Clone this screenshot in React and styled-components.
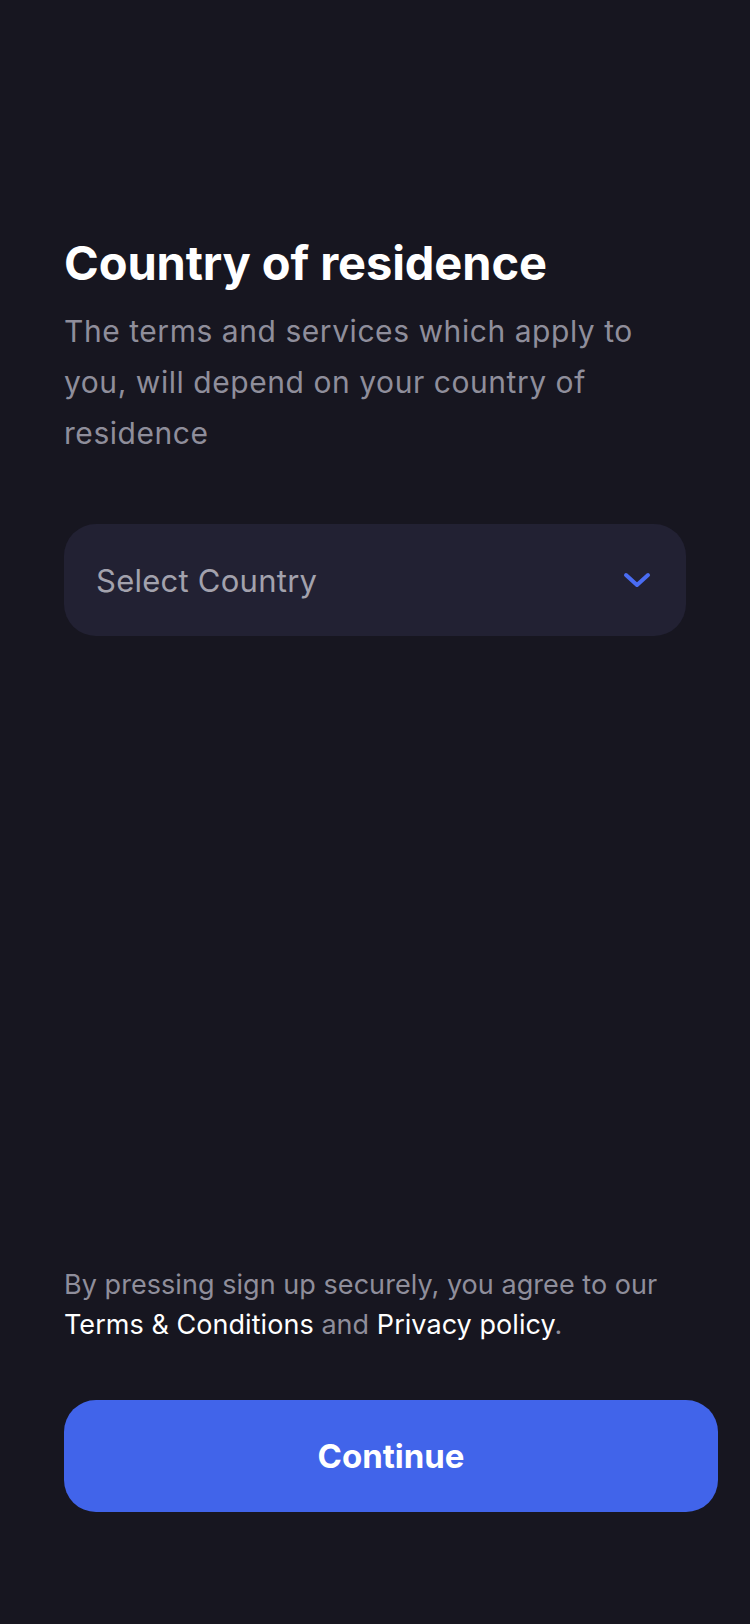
import React from "react";
import styled, { createGlobalStyle } from "styled-components";

const Global = createGlobalStyle`
  html, body { margin: 0; padding: 0; background: #171620; }
  body { font-family: Inter, "Noto Sans", sans-serif; -webkit-font-smoothing: antialiased; }
  * { box-sizing: border-box; }
`;

const Screen = styled.div`
  min-height: 1624px;
  width: 750px;
  background: #171620;
  display: flex;
  flex-direction: column;
  padding: 233px 0 112px 64px;
`;

const Header = styled.div`
  display: flex;
  flex-direction: column;
  padding-right: 64px;
`;

const Title = styled.h1`
  margin: 0;
  font-size: 47px;
  line-height: 60px;
  font-weight: 700;
  color: #ffffff;
  letter-spacing: -0.1px;
`;

const Subtitle = styled.p`
  margin: 13px 0 0;
  max-width: 600px;
  font-size: 30px;
  line-height: 51px;
  font-weight: 400;
  color: #8f8e9b;
  letter-spacing: 0.55px;
`;

const Select = styled.button`
  margin: 65px 64px 0 0;
  height: 112px;
  border: none;
  border-radius: 32px;
  background: #222133;
  display: flex;
  align-items: center;
  justify-content: space-between;
  padding: 0 35px 0 32px;
  font-family: inherit;
  cursor: pointer;
`;

const Placeholder = styled.span`
  font-size: 31px;
  font-weight: 400;
  color: #a3a2ad;
  letter-spacing: 0.25px;
`;

const Spacer = styled.div`
  flex: 1;
`;

const Footer = styled.div`
  display: flex;
  flex-direction: column;
  padding-right: 32px;
`;

const Legal = styled.p`
  margin: 0 32px 0 0;
  font-size: 27px;
  line-height: 40px;
  color: #8f8e9b;
  letter-spacing: 0.05px;
`;

const LinkText = styled.a`
  color: #ffffff;
  text-decoration: none;
`;

const PrimaryButton = styled.button`
  margin-top: 55px;
  height: 112px;
  border: none;
  border-radius: 32px;
  background: #4164ea;
  color: #ffffff;
  font-family: inherit;
  font-size: 33px;
  font-weight: 700;
  cursor: pointer;
`;

const Chevron = () => (
  <svg width="28" height="18" viewBox="0 0 28 18" fill="none">
    <path
      d="M3 4 L14 14 L25 4"
      stroke="#4a6cf2"
      strokeWidth="4"
      strokeLinecap="round"
      strokeLinejoin="round"
    />
  </svg>
);

export default function App() {
  return (
    <>
      <Global />
      <Screen>
        <Header>
          <Title>Country of residence</Title>
          <Subtitle>
            The terms and services which apply to you, will depend on your
            country of residence
          </Subtitle>
        </Header>
        <Select type="button">
          <Placeholder>Select Country</Placeholder>
          <Chevron />
        </Select>
        <Spacer />
        <Footer>
          <Legal>
            By pressing sign up securely, you agree to our{" "}
            <LinkText href="#">Terms &amp; Conditions</LinkText> and{" "}
            <LinkText href="#">Privacy policy</LinkText>.
          </Legal>
          <PrimaryButton type="button">Continue</PrimaryButton>
        </Footer>
      </Screen>
    </>
  );
}
